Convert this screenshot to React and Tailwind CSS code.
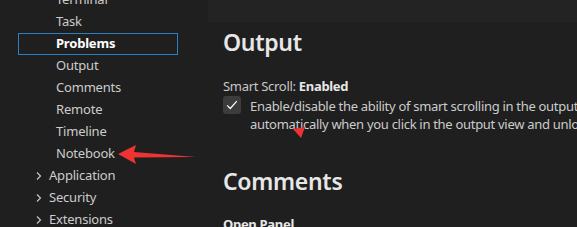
import React from 'react';

const font = { fontFamily: '"Noto Sans", "Open Sans", sans-serif' };

function Chevron() {
  return (
    <svg className="w-[10px] h-[10px] mr-[5px]" viewBox="0 0 10 10" fill="none" stroke="#c5c5c5" strokeWidth="1.2">
      <path d="M3 1.5 L6.5 5 L3 8.5" />
    </svg>
  );
}

function TreeItem({ label, selected, group }) {
  if (group) {
    return (
      <div className="h-[22px] flex items-center pl-[34px] text-[13px] tracking-[-0.2px] text-[#cccccc]">
        <Chevron />
        <span>{label}</span>
      </div>
    );
  }
  return (
    <div
      className={`h-[22px] flex items-center ml-[18px] w-[160px] pl-[37px] text-[13px] tracking-[-0.2px] ${
        selected ? 'border border-[#2b7fbf] font-bold text-white' : 'border border-transparent text-[#cccccc]'
      }`}
    >
      {label}
    </div>
  );
}

export default function App() {
  const items = ['Terminal', 'Task', 'Problems', 'Output', 'Comments', 'Remote', 'Timeline', 'Notebook'];
  return (
    <div className="relative w-[577px] h-[227px] overflow-hidden bg-[#1f1f1f] flex" style={font}>
      {/* Sidebar tree */}
      <div className="w-[208px] shrink-0 -mt-[11px]">
        {items.map((it) => (
          <TreeItem key={it} label={it} selected={it === 'Problems'} />
        ))}
        <TreeItem label="Application" group />
        <TreeItem label="Security" group />
        <TreeItem label="Extensions" group />
      </div>

      {/* Settings content */}
      <div className="flex-1 min-w-0 flex flex-col overflow-hidden">
        <div className="h-[22px] bg-[#232323] shrink-0"></div>
        <div className="pl-[15px]">
          <div className="text-[23px] font-semibold tracking-[-0.3px] text-[#e7e7e7] leading-[40px]">Output</div>
          <div className="mt-[15px] text-[13px] leading-[18px] tracking-[-0.3px] text-[#c8c8c8]">
            Smart Scroll: <span className="font-bold text-[#e7e7e7]">Enabled</span>
          </div>
          <div className="flex mt-[2px]">
            <div className="w-[18px] h-[18px] mt-[-1px] rounded-[3px] bg-[#3c3c3c] flex items-center justify-center shrink-0">
              <svg className="w-[14px] h-[14px]" viewBox="0 0 16 16" fill="none" stroke="#ffffff" strokeWidth="1.4">
                <path d="M2.5 8.5 L6 12 L13.5 3.5" />
              </svg>
            </div>
            <div className="ml-[9px] text-[13px] leading-[18px] tracking-[-0.3px] text-[#cccccc] whitespace-nowrap">
              <div>Enable/disable the ability of smart scrolling in the output view. Smart scrolling</div>
              <div>automatically when you click in the output view and unlocks when you click</div>
            </div>
          </div>
          <div className="mt-[28px] text-[23px] font-semibold tracking-[-0.3px] text-[#e7e7e7] leading-[40px]">Comments</div>
          <div className="mt-[14px] text-[13px] font-bold tracking-[-0.3px] text-[#e7e7e7] leading-[18px]">Open Panel</div>
        </div>
      </div>

      {/* Red annotation arrow */}
      <svg className="absolute left-0 top-0 pointer-events-none" width="577" height="227" viewBox="0 0 577 227">
        <path d="M118 154 L136 145 L134 152 L196 157 L134 157.5 L136 164 Z" fill="#ee3333" />
        <path d="M293 129 L305 127 L301 138 Z" fill="#ee3333" />
      </svg>
    </div>
  );
}
